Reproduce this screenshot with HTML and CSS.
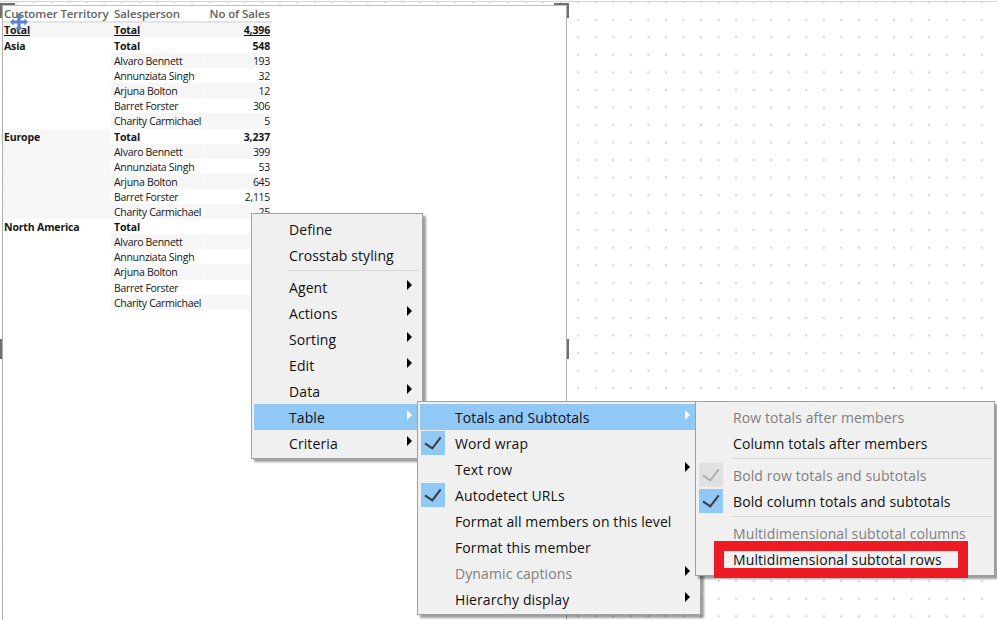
FILE: index.html
```html
<!DOCTYPE html>
<html lang="en">
<head>
<meta charset="utf-8">
<title>Crosstab menu</title>
<link rel="stylesheet" href="styles.css">
</head>
<body>
<div class="canvas">
  <div class="visual">
    <span class="handle h-tl"></span><span class="handle h-tr"></span>
    <span class="handle h-ml"></span><span class="handle h-mr"></span>
    <svg class="move" width="18" height="18" viewBox="0 0 18 18"><path d="M9 0l3.6 3.6H10.6V7.4H14.4V5.4L18 9l-3.6 3.6v-2H10.6v3.8h2L9 18l-3.6-3.6h2v-3.8H3.6v2L0 9l3.6-3.6v2h3.8V3.6h-2z" fill="#5a82ca"/></svg>
    <div class="xtab">
      <div class="xhead"><span>Customer Territory</span><span>Salesperson</span><span class="num">No of Sales</span></div>
      <div class="xgrand"><span>Total</span><span>Total</span><span class="num">4,396</span></div>

      <div class="group">
        <div class="terr">Asia</div>
        <div class="rows">
          <div class="row total"><span>Total</span><span class="num">548</span></div>
          <div class="row alt"><span>Alvaro Bennett</span><span class="num">193</span></div>
          <div class="row"><span>Annunziata Singh</span><span class="num">32</span></div>
          <div class="row alt"><span>Arjuna Bolton</span><span class="num">12</span></div>
          <div class="row"><span>Barret Forster</span><span class="num">306</span></div>
          <div class="row alt"><span>Charity Carmichael</span><span class="num">5</span></div>
        </div>
      </div>
      <div class="group shaded">
        <div class="terr">Europe</div>
        <div class="rows">
          <div class="row total"><span>Total</span><span class="num">3,237</span></div>
          <div class="row alt"><span>Alvaro Bennett</span><span class="num">399</span></div>
          <div class="row"><span>Annunziata Singh</span><span class="num">53</span></div>
          <div class="row alt"><span>Arjuna Bolton</span><span class="num">645</span></div>
          <div class="row"><span>Barret Forster</span><span class="num">2,115</span></div>
          <div class="row alt"><span>Charity Carmichael</span><span class="num">25</span></div>
        </div>
      </div>
      <div class="group">
        <div class="terr">North America</div>
        <div class="rows">
          <div class="row total"><span>Total</span><span class="num"></span></div>
          <div class="row alt"><span>Alvaro Bennett</span><span class="num"></span></div>
          <div class="row"><span>Annunziata Singh</span><span class="num"></span></div>
          <div class="row alt"><span>Arjuna Bolton</span><span class="num"></span></div>
          <div class="row"><span>Barret Forster</span><span class="num"></span></div>
          <div class="row alt"><span>Charity Carmichael</span><span class="num"></span></div>
        </div>
      </div>
    </div>
  </div>

  <div class="menu menu-1">
    <div class="item"><span class="gut"></span><span class="lbl">Define</span></div>
    <div class="item"><span class="gut"></span><span class="lbl">Crosstab styling</span></div>
    <div class="sep"></div>
    <div class="item"><span class="gut"></span><span class="lbl">Agent</span><span class="arr"></span></div>
    <div class="item"><span class="gut"></span><span class="lbl">Actions</span><span class="arr"></span></div>
    <div class="item"><span class="gut"></span><span class="lbl">Sorting</span><span class="arr"></span></div>
    <div class="item"><span class="gut"></span><span class="lbl">Edit</span><span class="arr"></span></div>
    <div class="item"><span class="gut"></span><span class="lbl">Data</span><span class="arr"></span></div>
    <div class="item on"><span class="gut"></span><span class="lbl">Table</span><span class="arr"></span></div>
    <div class="item"><span class="gut"></span><span class="lbl">Criteria</span><span class="arr"></span></div>
  </div>

  <div class="menu menu-2">
    <div class="item on"><span class="gut"></span><span class="lbl">Totals and Subtotals</span><span class="arr"></span></div>
    <div class="item"><span class="gut"><span class="chk"><svg width="24" height="24" viewBox="0 0 24 24"><path d="M4 12.3l7.3 5 8.4-11" fill="none" stroke="#3c3c3c" stroke-width="2"/></svg></span></span><span class="lbl">Word wrap</span></div>
    <div class="item"><span class="gut"></span><span class="lbl">Text row</span><span class="arr"></span></div>
    <div class="item"><span class="gut"><span class="chk"><svg width="24" height="24" viewBox="0 0 24 24"><path d="M4 12.3l7.3 5 8.4-11" fill="none" stroke="#3c3c3c" stroke-width="2"/></svg></span></span><span class="lbl">Autodetect URLs</span></div>
    <div class="item"><span class="gut"></span><span class="lbl">Format all members on this level</span></div>
    <div class="item"><span class="gut"></span><span class="lbl">Format this member</span></div>
    <div class="item off"><span class="gut"></span><span class="lbl">Dynamic captions</span><span class="arr"></span></div>
    <div class="item"><span class="gut"></span><span class="lbl">Hierarchy display</span><span class="arr"></span></div>
  </div>

  <div class="menu menu-3">
    <div class="item off"><span class="gut"></span><span class="lbl">Row totals after members</span></div>
    <div class="item"><span class="gut"></span><span class="lbl">Column totals after members</span></div>
    <div class="sep"></div>
    <div class="item off"><span class="gut"><span class="chk chk-off"><svg width="24" height="24" viewBox="0 0 24 24"><path d="M4 12.3l7.3 5 8.4-11" fill="none" stroke="#b0b0b0" stroke-width="2"/></svg></span></span><span class="lbl">Bold row totals and subtotals</span></div>
    <div class="item"><span class="gut"><span class="chk"><svg width="24" height="24" viewBox="0 0 24 24"><path d="M4 12.3l7.3 5 8.4-11" fill="none" stroke="#3c3c3c" stroke-width="2"/></svg></span></span><span class="lbl">Bold column totals and subtotals</span></div>
    <div class="sep"></div>
    <div class="item off"><span class="gut"></span><span class="lbl">Multidimensional subtotal columns</span></div>
    <div class="item"><span class="gut"></span><span class="lbl">Multidimensional subtotal rows</span></div>
  </div>

  <div class="redbox"></div>
</div>
</body>
</html>
```
FILE: styles.css
```css
* { box-sizing: border-box; }
html, body { margin: 0; padding: 0; }
body { width: 997px; height: 620px; padding-top: 1px; overflow: hidden; background: #fff; font-family: "Open Sans", "Noto Sans", sans-serif; }

.canvas {
  position: relative;
  width: 997px;
  height: 619px;
  padding: 3px 0 0 2px;
  background-color: #fff;
  background-image: radial-gradient(circle at center, #d6d6d6 0, #d6d6d6 1px, transparent 1.6px);
  background-size: 17.55px 17.55px;
  background-position: 7.9px 8.9px;
  border-top: 1px solid #d4d4d4;
}

.visual {
  position: relative;
  width: 565px;
  height: 620px;
  background: #fff;
  border-left: 1px solid #b0b0b0;
  border-right: 1px solid #b0b0b0;
  border-top: 1px solid #c0c0c0;
}

.handle { position: absolute; background: #6f6f6f; }
.h-tl { left: -3px; top: -3px; width: 15px; height: 2px; }
.h-tl::after { content: ""; position: absolute; left: 0; top: 0; width: 2px; height: 15px; background: #6f6f6f; }
.h-tr { right: -3px; top: -3px; width: 15px; height: 2px; }
.h-tr::after { content: ""; position: absolute; right: 0; top: 0; width: 2px; height: 15px; background: #6f6f6f; }
.h-ml { left: -3px; top: 333px; width: 2px; height: 20px; }
.h-mr { right: -3px; top: 333px; width: 2px; height: 20px; }

.move { position: absolute; left: 7px; top: 7px; z-index: 2; }

.xtab { width: 269px; font-size: 10.5px; letter-spacing: -.3px; color: #161616; line-height: 15px; }
.xhead, .xgrand { display: grid; grid-template-columns: 108px 93px 68px; }
.xhead { height: 17px; color: #626262; font-weight: 600; font-size: 11.5px; letter-spacing: -.1px; border-bottom: 2px solid #e4e4e4; }
.xhead span, .xgrand span, .row span { padding: 0 3px; white-space: nowrap; }
.xhead span:first-child, .xgrand span:first-child { padding-left: 1px; }
.xhead .num, .xgrand .num, .row .num { padding-right: 2px; }
.xgrand { height: 15px; background: #f6f6f6; font-weight: 700; letter-spacing: -.15px; text-decoration: underline; }
.num { text-align: right; }

.group { display: grid; grid-template-columns: 108px 161px; }
.terr { font-weight: 700; letter-spacing: -.15px; padding: 1px 0 0 1px; white-space: nowrap; }
.shaded .terr { background: #f7f7f7; }
.rows { display: flex; flex-direction: column; }
.row { display: grid; grid-template-columns: 93px 68px; height: 15.1px; line-height: 16px; white-space: nowrap; }
.row.alt span { background: #f6f6f6; height: 15.1px; }
.row.alt .num { margin-left: 1px; }
.row.total { font-weight: 700; letter-spacing: -.15px; background: #fff; }

.menu {
  position: absolute;
  z-index: 5;
  display: flex;
  flex-direction: column;
  padding: 2px;
  background: #f0f0f0;
  border: 1px solid #a0a0a0;
  box-shadow: 3px 3px 2px rgba(0, 0, 0, .38);
  font-size: 14px;
  letter-spacing: .1px;
  color: #111;
}
.menu-1 { left: 251px; top: 211px; width: 172px; height: 246px; }
.menu-2 { left: 417px; top: 399px; width: 284px; height: 214px; }
.menu-3 { left: 695px; top: 399px; width: 300px; height: 175px; }

.item { display: flex; align-items: center; height: 26px; flex: none; }
.item.on { background: #90c8f6; }
.item.off { color: #7f7f7f; }
.gut { width: 35px; height: 26px; flex: none; display: flex; align-items: center; padding-left: 1px; }
.lbl { flex: 1; white-space: nowrap; }
.chk { width: 24px; height: 24px; display: block; background: #90c8f6; }
.chk-off { background: #e0e0e0; }
.chk svg { display: block; }
.arr { width: 0; height: 0; margin-right: 8px; margin-top: -5px; border-left: 5px solid #000; border-top: 5px solid transparent; border-bottom: 5px solid transparent; }
.on .arr { border-left-color: #fff; }

.sep { height: 1px; flex: none; margin: 2px 0 3px 33px; background: #d8d8d8; }

.redbox { position: absolute; z-index: 6; left: 714px; top: 539px; width: 254px; height: 37px; border: 10px solid #ed1c24; }
```
